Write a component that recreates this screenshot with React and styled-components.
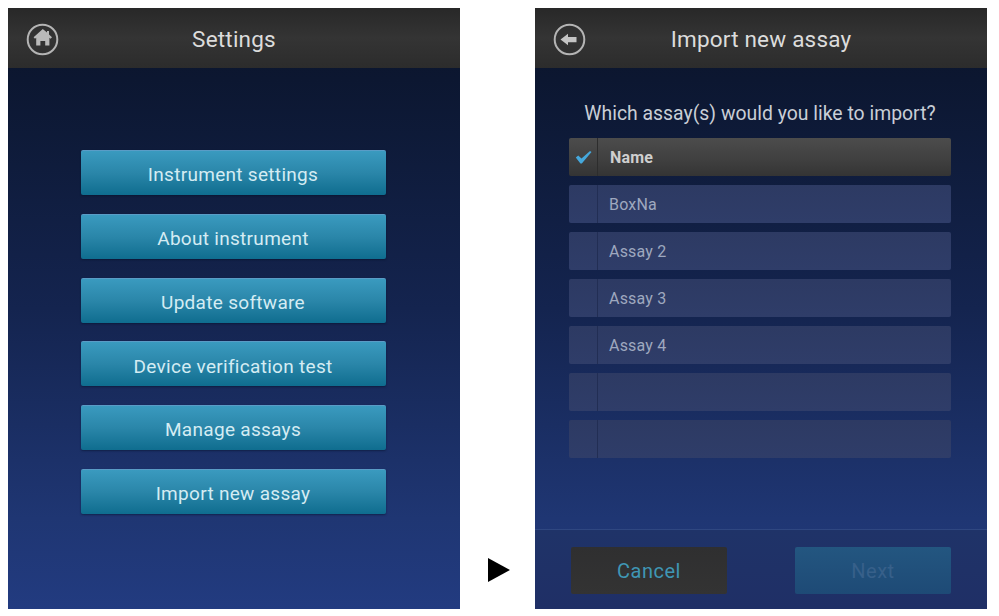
import React from "react";
import styled, { createGlobalStyle } from "styled-components";

const Global = createGlobalStyle`
  html, body { margin: 0; padding: 0; background: #fff; }
  body { font-family: Roboto, "Liberation Sans", sans-serif; }
`;

const Page = styled.div`
  width: 999px;
  height: 616px;
  box-sizing: border-box;
  padding: 8px 12px 7px 8px;
  display: grid;
  grid-template-columns: 452px 75px 452px;
  overflow: hidden;
`;

const Screen = styled.section`
  display: flex;
  flex-direction: column;
  height: 601px;
  background: linear-gradient(180deg, #0b1427 0%, #0c1731 12%, #14244f 50%, #1f3673 85%, #223b80 100%);
  overflow: hidden;
`;

const Header = styled.header`
  height: 60px;
  flex: none;
  position: relative;
  display: flex;
  align-items: center;
  justify-content: center;
  background: linear-gradient(180deg, #282828 0%, #343434 50%, #2c2c2c 100%);
`;

const Title = styled.h1`
  margin: 1px 0 0;
  font-size: 22.5px;
  font-weight: 400;
  letter-spacing: 0.2px;
  color: #dcdcdc;
`;

const RoundIcon = styled.svg`
  position: absolute;
  left: 18px;
  top: 15px;
  width: 33px;
  height: 33px;
`;

const Menu = styled.div`
  display: flex;
  flex-direction: column;
  align-items: center;
  gap: 18.8px;
  padding: 82px 2px 0 0;
`;

const MenuButton = styled.button`
  width: 305px;
  height: 45px;
  padding: 3.5px 0 0;
  border: 0;
  border-top: 1px solid #5a9cc6;
  border-radius: 2px;
  background: linear-gradient(180deg, #3a9abf 0%, #2a86a9 50%, #0f6d8f 100%);
  box-shadow: 0 1px 2px rgba(6, 16, 40, 0.5);
  font-family: inherit;
  font-size: 19px;
  letter-spacing: 0.3px;
  color: #d4ecf3;
`;

const ArrowCell = styled.div`
  display: flex;
  align-items: flex-end;
  justify-content: center;
  padding-bottom: 27px;
  padding-left: 2px;
`;

const Arrow = styled.svg`
  width: 22px;
  height: 24px;
`;

const Body = styled.div`
  flex: 1;
  display: flex;
  flex-direction: column;
  align-items: center;
  padding-right: 2px;
`;

const Question = styled.p`
  margin: 0;
  padding-top: 34px;
  height: 36px;
  line-height: 24px;
  font-size: 19.4px;
  color: #c9ced6;
  white-space: nowrap;
`;

const Table = styled.div`
  display: flex;
  flex-direction: column;
  gap: 9px;
  width: 382px;
`;

const Row = styled.div`
  height: 38px;
  display: grid;
  grid-template-columns: 29px 1fr;
  border-radius: 2px;
  background: ${(p) =>
    p.$head
      ? "linear-gradient(180deg, #4c4c4c 0%, #3f3f3f 60%, #343434 100%)"
      : "linear-gradient(180deg, #2d3a63 0%, #2f3d69 100%)"};
`;

const CheckCell = styled.div`
  display: flex;
  align-items: center;
  justify-content: center;
  border-right: 1px solid ${(p) => (p.$head ? "#2d2d2d" : "#222e54")};
`;

const Cell = styled.div`
  display: flex;
  align-items: center;
  padding-left: ${(p) => (p.$head ? 12 : 11)}px;
  padding-top: ${(p) => (p.$head ? 1 : 0)}px;
  font-size: 16px;
  letter-spacing: 0.2px;
  font-weight: ${(p) => (p.$head ? 700 : 400)};
  color: ${(p) => (p.$head ? "#cfcfcf" : "#9ea8bf")};
`;

const Footer = styled.footer`
  height: 80px;
  flex: none;
  box-sizing: border-box;
  display: flex;
  justify-content: space-between;
  padding: 17px 36px 0;
  border-top: 1px solid #2f4781;
  background: linear-gradient(180deg, #1f3368 0%, #1f2f66 100%);
`;

const FootButton = styled.button`
  width: 156px;
  height: 47px;
  padding: 0;
  border: 0;
  border-radius: 2px;
  font-family: inherit;
  font-size: 20px;
  letter-spacing: 0.5px;
  background: ${(p) => (p.$disabled ? "linear-gradient(180deg, #235680 0%, #1e4a76 100%)" : "linear-gradient(180deg, #2f2f30 0%, #333333 100%)")};
  color: ${(p) => (p.$disabled ? "#37608a" : "#3f96b4")};
`;

const menu = ["Instrument settings", "About instrument", "Update software", "Device verification test", "Manage assays", "Import new assay"];
const rows = ["BoxNa", "Assay 2", "Assay 3", "Assay 4", "", ""];

export default function App() {
  return (
    <>
      <Global />
      <Page>
        <Screen>
          <Header>
            <RoundIcon viewBox="0 0 33 33">
              <circle cx="16.5" cy="16.5" r="14.8" fill="none" stroke="#b4b4b4" strokeWidth="2" />
              <path d="M16.8 6 L21 9.6 L21 8 L23 8 L23 11.4 L26 14.2 L24.6 15.8 L23.4 14.8 L23.4 22.6 L19.2 22.6 L19.2 18 L14.4 18 L14.4 22.6 L10.2 22.6 L10.2 14.8 L9 15.8 L7.6 14.2 Z" fill="#b9b9b9" />
            </RoundIcon>
            <Title>Settings</Title>
          </Header>
          <Menu>
            {menu.map((m) => (
              <MenuButton key={m}>{m}</MenuButton>
            ))}
          </Menu>
        </Screen>
        <ArrowCell>
          <Arrow viewBox="0 0 22 24">
            <path d="M0 0 L22 12 L0 24 Z" fill="#000" />
          </Arrow>
        </ArrowCell>
        <Screen>
          <Header>
            <RoundIcon viewBox="0 0 33 33">
              <circle cx="16.5" cy="16.5" r="14.8" fill="none" stroke="#b4b4b4" strokeWidth="2" />
              <path d="M7.5 16.5 L15 10.8 L15 14 L23.5 14 L23.5 19.2 L15 19.2 L15 22.3 Z" fill="#c4c4c4" />
            </RoundIcon>
            <Title>Import new assay</Title>
          </Header>
          <Body>
            <Question>Which assay(s) would you like to import?</Question>
            <Table>
              <Row $head>
                <CheckCell $head>
                  <svg width="17" height="14" viewBox="0 0 17 14">
                    <path d="M0.8 7.5 L3.2 5.6 L6.5 8.6 L15 1 L16.5 2 L6.8 13.5 L5.4 13.5 Z" fill="#45a8dc" />
                  </svg>
                </CheckCell>
                <Cell $head>Name</Cell>
              </Row>
              {rows.map((r, i) => (
                <Row key={i}>
                  <CheckCell />
                  <Cell>{r}</Cell>
                </Row>
              ))}
            </Table>
          </Body>
          <Footer>
            <FootButton>Cancel</FootButton>
            <FootButton $disabled>Next</FootButton>
          </Footer>
        </Screen>
      </Page>
    </>
  );
}
